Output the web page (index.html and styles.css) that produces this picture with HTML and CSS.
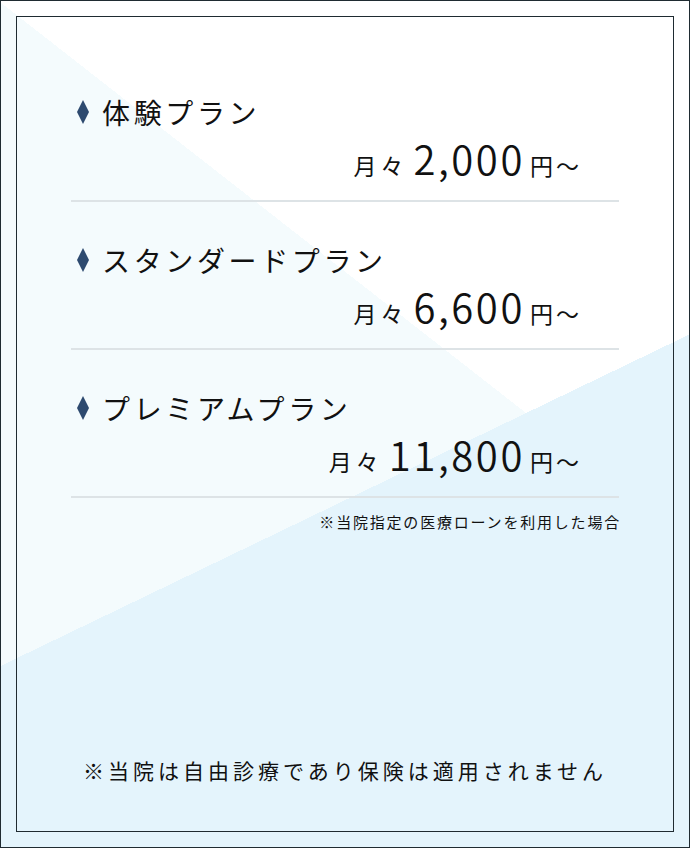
FILE: index.html
```html
<!DOCTYPE html>
<html lang="ja">
<head>
<meta charset="utf-8">
<title>料金プラン</title>
<link rel="stylesheet" href="styles.css">
</head>
<body>
<div class="page">
  <div class="frame">
    <div class="plans">
      <section class="plan">
        <h2 class="plan-title"><svg class="diamond" viewBox="0 0 12 24" width="12" height="24"><polygon points="6,0 12,12 6,24 0,12" fill="#2d4a6f"/></svg>体験プラン</h2>
        <p class="price"><span class="unit">月々</span><span class="num">2,000</span><span class="yen">円～</span></p>
      </section>
      <section class="plan">
        <h2 class="plan-title"><svg class="diamond" viewBox="0 0 12 24" width="12" height="24"><polygon points="6,0 12,12 6,24 0,12" fill="#2d4a6f"/></svg>スタンダードプラン</h2>
        <p class="price"><span class="unit">月々</span><span class="num">6,600</span><span class="yen">円～</span></p>
      </section>
      <section class="plan">
        <h2 class="plan-title"><svg class="diamond" viewBox="0 0 12 24" width="12" height="24"><polygon points="6,0 12,12 6,24 0,12" fill="#2d4a6f"/></svg>プレミアムプラン</h2>
        <p class="price"><span class="unit">月々</span><span class="num">11,800</span><span class="yen">円～</span></p>
      </section>
      <p class="loan-note">※当院指定の医療ローンを利用した場合</p>
    </div>
    <p class="insurance-note">※当院は自由診療であり保険は適用されません</p>
  </div>
</div>
</body>
</html>
```

FILE: styles.css
```css
* {
  box-sizing: border-box;
}

html, body {
  margin: 0;
  padding: 0;
}

body {
  font-family: "Noto Sans CJK JP", "Noto Sans", sans-serif;
  color: #111;
}

.page {
  width: 690px;
  height: 848px;
  border: 1px solid #1f2b31;
  padding: 15px;
  background-color: #ffffff;
  background-image:
    linear-gradient(154.3deg, transparent 599px, #e4f4fc 599px),
    linear-gradient(218deg, transparent 425px, #f4fbfd 425px);
}

.frame {
  height: 816px;
  border: 1px solid #1f2b31;
  display: flex;
  flex-direction: column;
}

.plans {
  padding: 37px 54px 0;
}

.plan {
  padding: 38px 0 18px;
  border-bottom: 2px solid #dde3e6;
}

.plan-title {
  margin: 0;
  display: flex;
  align-items: center;
  font-size: 28px;
  font-weight: 400;
  line-height: 40px;
  letter-spacing: 0.13em;
}

.diamond {
  margin: 0 13px 0 6px;
  flex: none;
}

.price {
  margin: 2px 0 0;
  height: 48px;
  padding-right: 37px;
  display: flex;
  justify-content: flex-end;
  align-items: baseline;
  line-height: 48px;
}

.unit {
  font-size: 23px;
  letter-spacing: 4px;
  margin-right: 6px;
}

.num {
  font-size: 40px;
  font-weight: 350;
  letter-spacing: 2.6px;
  margin-right: 5px;
}

.yen {
  font-size: 23px;
  letter-spacing: 3px;
}

.loan-note {
  margin: 14px 0 0;
  text-align: right;
  font-size: 15px;
  letter-spacing: 0.12em;
  line-height: 20px;
  margin-right: -2px;
}

.insurance-note {
  margin: auto 0 46px;
  text-align: center;
  font-size: 21px;
  letter-spacing: 4px;
  line-height: 30px;
}
```
